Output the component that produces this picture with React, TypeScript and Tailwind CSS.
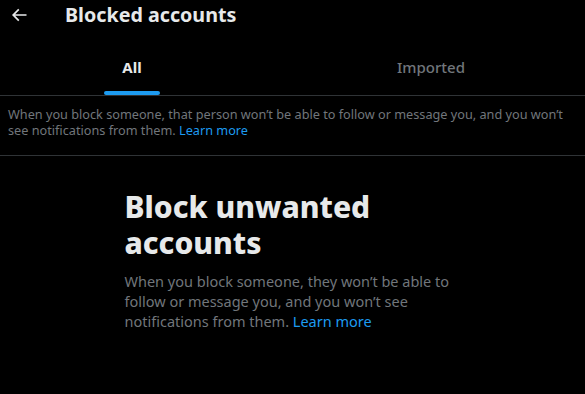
export default function App() {
  return (
    <div
      className="h-[394px] w-[585px] overflow-hidden bg-black text-[#e7e9ea]"
      style={{ fontFamily: '"Noto Sans", "Open Sans", sans-serif' }}
    >
      {/* Header */}
      <div className="flex h-[30px] items-center">
        <svg viewBox="0 0 24 24" className="ml-[9px] h-5 w-5 fill-[#e7e9ea]">
          <path d="M7.414 13l5.043 5.04-1.414 1.42L3.586 12l7.457-7.46 1.414 1.42L7.414 11H21v2H7.414z" />
        </svg>
        <h1 className="ml-[36px] text-[19.7px] leading-6 font-bold">Blocked accounts</h1>
      </div>

      {/* Tabs */}
      <div className="mt-[12px] flex h-[54px] w-[598px] border-b border-[#2f3336]">
        <div className="relative flex w-[264px] items-center justify-center">
          <span className="-mt-[2px] text-[15px] font-bold">All</span>
          <div className="absolute bottom-0 left-[104px] h-1 w-[56px] rounded-full bg-[#1d9bf0]" />
        </div>
        <div className="flex flex-1 items-center justify-center">
          <span className="-mt-[2px] text-[15px] font-medium text-[#71767b]">Imported</span>
        </div>
      </div>

      {/* Info */}
      <div className="border-b border-[#2f3336] px-[8px] pt-[10px] pb-[17px] text-[12.7px] leading-4 text-[#71767b]">
        When you block someone, that person won’t be able to follow or message you, and you won’t
        see notifications from them. <span className="text-[#1d9bf0]">Learn more</span>
      </div>

      {/* Empty state */}
      <div className="mx-auto mt-[33px] w-[336px]">
        <h2 className="text-[30px] leading-9 font-extrabold">Block unwanted accounts</h2>
        <p className="mt-[10px] text-[14.5px] leading-5 text-[#71767b]">
          When you block someone, they won’t be able to follow or message you, and you won’t see
          notifications from them. <span className="text-[#1d9bf0]">Learn more</span>
        </p>
      </div>
    </div>
  );
}
